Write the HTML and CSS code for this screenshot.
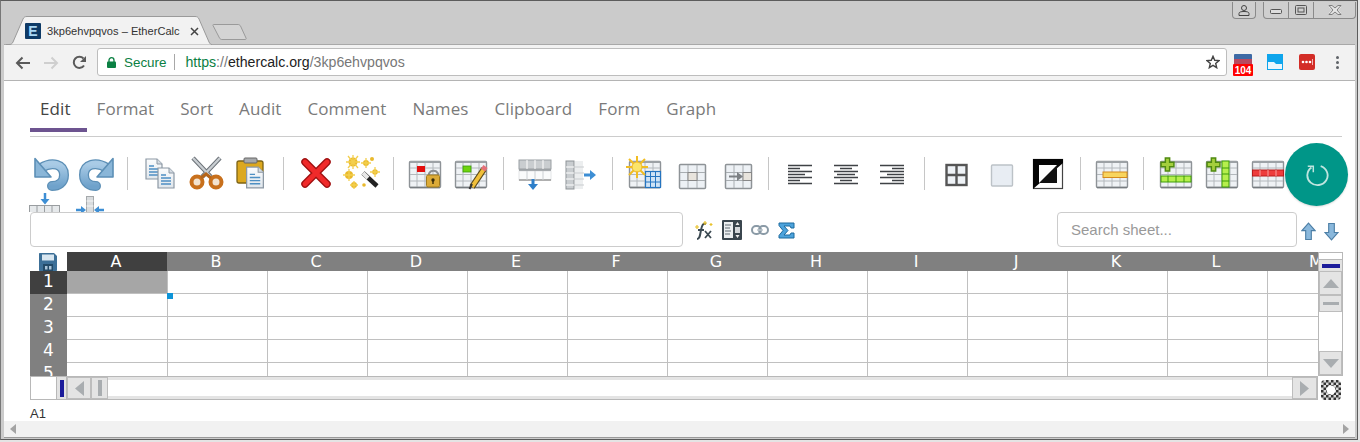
FILE: index.html
```html
<!DOCTYPE html>
<html lang="en">
<head>
<meta charset="utf-8">
<title>3kp6ehvpqvos – EtherCalc</title>
<link rel="stylesheet" href="styles.css">
</head>
<body>
<svg class="defs" width="0" height="0" aria-hidden="true">
  <defs>
    <linearGradient id="gfold" x1="0" y1="0" x2="0" y2="1"><stop offset="0" stop-color="#fbfcfd"/><stop offset="1" stop-color="#dfe6ec"/></linearGradient>
    <linearGradient id="gblue" x1="0" y1="0" x2="0" y2="1"><stop offset="0" stop-color="#a9cbe6"/><stop offset="1" stop-color="#6fa2cb"/></linearGradient>
    <symbol id="undo" viewBox="0 0 46 36">
      <path d="M14 13C25 6 37 9 37 20C37 28 31 31 25 31" fill="none" stroke="#5c8fb6" stroke-width="10" stroke-linecap="round"/>
      <path d="M14 13C25 6 37 9 37 20C37 28 31 31 25 31" fill="none" stroke="url(#gblue)" stroke-width="7.400" stroke-linecap="round"/>
      <path d="M8 3.500L8 22L24 22Z" fill="#8ab6d8" stroke="#5c8fb6" stroke-width="1.600" stroke-linejoin="round"/>
    </symbol>
    <symbol id="doc" viewBox="0 0 18 22">
      <path d="M1 1H12L17 6V21H1Z" fill="url(#gfold)" stroke="#8c98a4" stroke-width="1.200"/>
      <path d="M12 1V6H17" fill="#d5dce3" stroke="#8c98a4"/>
      <path d="M4 8H9M4 11H14M4 14H14M4 17H14" stroke="#4d8fc3" stroke-width="1.300"/>
    </symbol>
    <symbol id="tb" viewBox="0 0 46 36">
      <rect x="7.500" y="6.500" width="31" height="26" rx="1" fill="#eff2f5" stroke="#8e9397" stroke-width="1.400"/>
      <path d="M15 7V32M23 7V32M31 7V32M8 13H38M8 19.500H38M8 26H38" stroke="#b3b8bc" stroke-width="1"/>
      <path d="M8 32.500H38" stroke="#777c80" stroke-width="1.500"/>
      <path d="M8 7H38" stroke="#9ca1a5" stroke-width="2"/>
    </symbol>
    <symbol id="tb3" viewBox="0 0 46 36">
      <rect x="11.500" y="9.500" width="26" height="24" rx="1" fill="#edf1f5" stroke="#8e9397" stroke-width="1.500"/>
      <path d="M20 10V33M29 10V33M12 17.500H37M12 25.500H37" stroke="#a8adb1" stroke-width="1"/>
    </symbol>
    <symbol id="plus" viewBox="0 0 14 14">
      <path d="M5 1H9V5H13V9H9V13H5V9H1V5H5Z" fill="#a4cf3d" stroke="#4f8a10" stroke-width="1.400"/>
    </symbol>
    <symbol id="al" viewBox="0 0 46 36">
      <path d="M10 10.500H34M10 13.500H22M10 16.500H34M10 19.500H27M10 22.500H34M10 25.500H22M10 28.500H34" stroke="#3f4246" stroke-width="1.600"/>
    </symbol>
  </defs>
</svg>

<div class="window">
  <header class="titlebar">
    <div class="tabs">
      <div class="tab">
        <svg class="tab-shape" width="206" height="30" viewBox="0 0 206 30"><path d="M0 29.500H3C5 29.500 6 29 7 27L17 4C18 2 19 1.500 21 1.500H189C191 1.500 192 2 193 4L203 27C204 29 205 29.500 206 29.500" fill="#f2f2f2" stroke="#9a9a9a"/></svg>
        <span class="favicon">E</span>
        <span class="tab-title">3kp6ehvpqvos – EtherCalc</span>
        <svg class="tab-close" width="9" height="9" viewBox="0 0 9 9"><path d="M1 1L8 8M8 1L1 8" stroke="#444" stroke-width="1.500"/></svg>
      </div>
      <svg class="newtab" width="36" height="18" viewBox="0 0 36 18"><path d="M1.500 1.500H26C27 1.500 28 2 28.500 3L34 15C34.500 16 34 16.500 33 16.500H10C9 16.500 8 16 7.500 15L1 2.500C.7 2 1 1.500 1.500 1.500Z" fill="#d4d4d4" stroke="#9a9a9a"/></svg>
    </div>
    <div class="caption">
      <div class="cap-group cap-user">
        <svg width="12" height="11" viewBox="0 0 12 11"><circle cx="6" cy="3" r="2.500" fill="none" stroke="#444"/><path d="M1 10.500V8.500C1 7 3 6.500 6 6.500S11 7 11 8.500V10.500Z" fill="none" stroke="#444"/></svg>
      </div>
      <div class="cap-group cap-win">
        <span class="cap-btn cap-min"><svg width="12" height="6" viewBox="0 0 12 6"><rect x=".5" y=".5" width="11" height="4" rx="1" fill="#ddd" stroke="#555"/></svg></span>
        <span class="cap-btn cap-max"><svg width="12" height="10" viewBox="0 0 12 10"><rect x=".5" y=".5" width="11" height="9" rx="1" fill="none" stroke="#555"/><rect x="3" y="3" width="6" height="4" fill="none" stroke="#555"/></svg></span>
        <span class="cap-btn cap-close"><svg width="14" height="10" viewBox="0 0 14 10"><path d="M2 1L12 9M12 1L2 9" stroke="#eee" stroke-width="3"/><path d="M1 .5H4L7 3 10 .5H13L9 5 13 9.500H10L7 7 4 9.500H1L5 5Z" fill="#e6e6e6" stroke="#666" stroke-width=".8"/></svg></span>
      </div>
    </div>
  </header>

  <div class="browserbar">
    <svg class="nav-ico" width="16" height="14" viewBox="0 0 16 14"><path d="M15 7H2M7.500 1.500L2 7L7.500 12.500" fill="none" stroke="#5a5a5a" stroke-width="2"/></svg>
    <svg class="nav-ico" width="16" height="14" viewBox="0 0 16 14"><path d="M1 7H14M8.500 1.500L14 7L8.500 12.500" fill="none" stroke="#cfcfcf" stroke-width="2"/></svg>
    <svg class="nav-ico" width="16" height="16" viewBox="0 0 16 16"><path d="M13 10.500A5.600 5.600 0 1 1 12.500 3.500" fill="none" stroke="#5a5a5a" stroke-width="2"/><path d="M15 1V7H9Z" fill="#5a5a5a"/></svg>
    <div class="omnibox">
      <svg class="lock" width="9" height="11" viewBox="0 0 9 11"><rect y="4.500" width="9" height="6.500" rx="1" fill="#0b8043"/><path d="M2 5V3.200A2.500 2.500 0 0 1 7 3.200V5" fill="none" stroke="#0b8043" stroke-width="1.300"/></svg>
      <span class="secure">Secure</span>
      <span class="omni-sep"></span>
      <span class="url"><span class="u-green">https</span><span class="u-gray">://</span><span class="u-dark">ethercalc.org</span><span class="u-gray">/3kp6ehvpqvos</span></span>
      <svg class="star" width="14" height="14" viewBox="0 0 14 14"><path d="M7 1.300L8.700 5.300 13 5.600 9.700 8.400 10.700 12.700 7 10.400 3.300 12.700 4.300 8.400 1 5.600 5.300 5.300Z" fill="none" stroke="#444" stroke-width="1.400"/></svg>
    </div>
    <div class="ext ext-db">
      <svg width="18" height="14" viewBox="0 0 18 14"><rect width="18" height="6" rx="1" fill="#3d6aa5"/><rect y="5" width="18" height="9" fill="#b8495f"/></svg>
      <span class="ext-badge">104</span>
    </div>
    <div class="ext">
      <svg width="16" height="16" viewBox="0 0 16 16"><rect width="16" height="16" fill="#0ea5ec"/><path d="M1 8H7L9 10H15V15H1Z" fill="#eaf6fd"/></svg>
    </div>
    <div class="ext">
      <svg width="16" height="16" viewBox="0 0 16 16"><rect width="16" height="16" rx="2" fill="#d32d27"/><circle cx="4" cy="8" r="1.300" fill="#fff"/><circle cx="7.500" cy="8" r="1.300" fill="#fff"/><circle cx="11" cy="8" r="1.300" fill="#fff"/><rect x="13" y="5" width="1" height="6" fill="#f5b5b3"/></svg>
    </div>
    <div class="kebab"><i></i><i></i><i></i></div>
  </div>

  <main class="page">
    <nav class="sheet-tabs">
      <span class="stab active">Edit</span>
      <span class="stab">Format</span>
      <span class="stab">Sort</span>
      <span class="stab">Audit</span>
      <span class="stab">Comment</span>
      <span class="stab">Names</span>
      <span class="stab">Clipboard</span>
      <span class="stab">Form</span>
      <span class="stab">Graph</span>
    </nav>

    <div class="toolbar">
      <div class="tool-row">
        <svg class="ti" viewBox="0 0 46 36"><use href="#undo"/></svg>
        <svg class="ti" viewBox="0 0 46 36"><g transform="matrix(-1 0 0 1 48 0)"><use href="#undo" width="46" height="36"/></g></svg>
        <i class="sep"></i>
        <svg class="ti" viewBox="0 0 46 36"><use href="#doc" x="8" y="3" width="18" height="22"/><use href="#doc" x="20" y="12" width="18" height="22"/></svg>
        <svg class="ti" viewBox="0 0 46 36">
          <path d="M10 3L28 22M37 3L19 22" stroke="#6c7278" stroke-width="4.400"/><path d="M10 3L28 22M37 3L19 22" stroke="#c9ced2" stroke-width="2.400"/>
          <circle cx="14" cy="27" r="5.500" fill="#f3e3cf" stroke="#c8701c" stroke-width="4"/><circle cx="33" cy="27" r="5.500" fill="#f3e3cf" stroke="#c8701c" stroke-width="4"/>
          <path d="M18 23L23 19 28 23" fill="none" stroke="#b5651a" stroke-width="3"/>
        </svg>
        <svg class="ti" viewBox="0 0 46 36">
          <rect x="8" y="6" width="26" height="22" rx="2" fill="#dca81f" stroke="#7d6314" stroke-width="1.300"/>
          <rect x="15" y="3" width="13" height="5" rx="1" fill="#a6a9ab" stroke="#666"/>
          <use href="#doc" x="16" y="11" width="20" height="23"/>
        </svg>
        <i class="sep"></i>
        <svg class="ti" viewBox="0 0 46 36">
          <path d="M12 7L34 29M34 7L12 29" stroke="#a01010" stroke-width="7.500" stroke-linecap="round"/>
          <path d="M12 7L34 29M34 7L12 29" stroke="#f02a2a" stroke-width="4.800" stroke-linecap="round"/>
        </svg>
        <svg class="ti" viewBox="0 0 46 36">
          <path d="M24 18L38 31" stroke="#222" stroke-width="4.500"/><path d="M24 18L29 23" stroke="#e8e8e8" stroke-width="4"/>
          <g fill="#e9b92c"><circle cx="14" cy="7" r="4.500"/><circle cx="10" cy="20" r="4"/><circle cx="15" cy="30" r="3"/><circle cx="27" cy="8" r="3"/><circle cx="33" cy="4" r="2"/><circle cx="36" cy="17" r="2.800"/><circle cx="25" cy="30" r="1.800"/></g>
          <path d="M14 0V14M7 7H21M9 13L19 1M19 13L9 1M10 14V26M4 20H16M27 3V13M22 8H32M36 12V22M31 17H41M15 26V34M11 30H19" stroke="#f3cf4f" stroke-width="1.300"/>
        </svg>
        <i class="sep"></i>
        <svg class="ti" viewBox="0 0 46 36"><use href="#tb"/><rect x="15" y="11" width="8" height="6" fill="#e30d0d"/><path d="M27 20V18.500A5 5 0 0 1 36 18.500V20" fill="none" stroke="#8c8f92" stroke-width="2"/><rect x="24.500" y="20" width="13" height="12" rx="1.500" fill="#dcab38" stroke="#a07a1c"/><circle cx="31" cy="25" r="1.700" fill="#3a2d0b"/><rect x="30.300" y="25" width="1.400" height="4" fill="#3a2d0b"/></svg>
        <svg class="ti" viewBox="0 0 46 36"><use href="#tb"/><rect x="15" y="11" width="8" height="6" fill="#6ed40e" stroke="#3a9c0a" stroke-width=".8"/><path d="M24 32L36 14" stroke="#5a4a1a" stroke-width="6"/><path d="M24 32L36 14" stroke="#f0bf3a" stroke-width="4"/><path d="M35 15L37.500 11.500" stroke="#e5707a" stroke-width="5"/><path d="M21.500 34L24 29" stroke="#333" stroke-width="2"/></svg>
        <i class="sep"></i>
        <svg class="ti" viewBox="0 0 46 36"><rect x="7" y="5" width="32" height="9" fill="#c9cdd0" stroke="#9a9fa3"/><path d="M15 5V14M23 5V14M31 5V14" stroke="#fff"/><rect x="7" y="16" width="32" height="9" fill="#fafbfb" stroke="#e4e6e8"/><path d="M7 15H39" stroke="#8e9397" stroke-width="1.500"/><path d="M7 25H39" stroke="#999" stroke-width="1.500"/><path d="M15 16V25M23 16V25M31 16V25" stroke="#ccd0d3"/><path d="M21 24V30" stroke="#2e7fc9" stroke-width="3"/><path d="M16 29H26L21 35Z" fill="#2e7fc9"/></svg>
        <svg class="ti" viewBox="0 0 46 36"><rect x="8" y="6" width="8" height="28" fill="#c9cdd0" stroke="#8e9397"/><path d="M8 12H16M8 18H16M8 24H16M8 30H16" stroke="#fff"/><rect x="17" y="6" width="8" height="28" fill="#eceeef"/><path d="M17 12H26M17 18H26M17 24H26M17 30H26" stroke="#c9cccf"/><path d="M26 20H33" stroke="#3d8ed4" stroke-width="3"/><path d="M32 15V25L38 20Z" fill="#3d8ed4"/></svg>
        <i class="sep"></i>
        <svg class="ti" viewBox="0 0 46 36"><use href="#tb"/><rect x="23.500" y="16.500" width="15" height="16" fill="#cfe3f5" stroke="#2474c0" stroke-width="1.200"/><path d="M23.500 21.500H38.500M23.500 27H38.500M28.500 16.500V32.500M33.500 16.500V32.500" stroke="#2474c0"/><path d="M15 1V23M4 12H26M7 4L23 20M23 4L7 20" stroke="#f1bd22" stroke-width="2"/><circle cx="15" cy="12" r="5" fill="#fbe46a" stroke="#eeb522"/></svg>
        <svg class="ti" viewBox="0 0 46 36"><use href="#tb3"/><rect x="20" y="17.500" width="9" height="8" fill="#e8e4dd" stroke="#888"/></svg>
        <svg class="ti" viewBox="0 0 46 36"><use href="#tb3"/><rect x="29" y="17.500" width="8.500" height="8" fill="#e8e4dd" stroke="#888"/><path d="M15 21.500H24" stroke="#7c8084" stroke-width="2"/><path d="M23 17V26L29 21.500Z" fill="#7c8084"/></svg>
        <i class="sep"></i>
        <svg class="ti" viewBox="0 0 46 36"><use href="#al"/></svg>
        <svg class="ti" viewBox="0 0 46 36"><path d="M10 10.500H34M16 13.500H28M10 16.500H34M13 19.500H31M10 22.500H34M16 25.500H28M10 28.500H34" stroke="#3f4246" stroke-width="1.600"/></svg>
        <svg class="ti" viewBox="0 0 46 36"><path d="M10 10.500H34M22 13.500H34M10 16.500H34M17 19.500H34M10 22.500H34M22 25.500H34M10 28.500H34" stroke="#3f4246" stroke-width="1.600"/></svg>
        <i class="sep"></i>
        <svg class="ti" viewBox="0 0 46 36"><rect x="13.500" y="10" width="20" height="20" fill="#eef2f6" stroke="#555" stroke-width="2.400"/><path d="M23.500 10V30M13.500 20H33.500" stroke="#555" stroke-width="2.400"/></svg>
        <svg class="ti" viewBox="0 0 46 36"><rect x="12.500" y="10" width="21" height="21" rx="1" fill="#e8edf3" stroke="#bcc2c7" stroke-width="1.400"/></svg>
        <svg class="ti" viewBox="0 0 46 36"><rect x="8.500" y="4.500" width="29" height="29" fill="#fff" stroke="#444" stroke-width="1.200"/><path d="M8 4H38V8L8 34Z" fill="#050505"/><rect x="14" y="10" width="18" height="18" fill="#fff"/><path d="M32 10V28H14Z" fill="#111"/></svg>
        <i class="sep"></i>
        <svg class="ti" viewBox="0 0 46 36"><use href="#tb"/><rect x="14" y="17" width="24" height="5.500" fill="#f8d55e" stroke="#d48a1c"/></svg>
        <i class="sep"></i>
        <svg class="ti" viewBox="0 0 46 36"><use href="#tb"/><rect x="8" y="21" width="30" height="6" fill="#b6ef4d" stroke="#3c9b0a"/><path d="M15 21V27M23 21V27M31 21V27" stroke="#3c9b0a"/><use href="#plus" x="7" y="2" width="15" height="15"/></svg>
        <svg class="ti" viewBox="0 0 46 36"><use href="#tb"/><rect x="23" y="6" width="7" height="26" fill="#b6ef4d" stroke="#3c9b0a"/><path d="M23 13H30M23 19H30M23 26H30" stroke="#3c9b0a"/><use href="#plus" x="7" y="2" width="15" height="15"/></svg>
        <svg class="ti" viewBox="0 0 46 36"><use href="#tb"/><rect x="7.500" y="15" width="31" height="6" fill="#ee3d3d" stroke="#b81c1c"/><path d="M15 15V21M23 15V21M31 15V21" stroke="#f7a0a0"/></svg>
      </div>
      <div class="tool-row tool-row-2">
        <svg class="ti" viewBox="0 0 46 36"><rect x="2.500" y="14.500" width="30" height="7" fill="#e6e9eb" stroke="#999da0"/><path d="M10 14.500V21M17.500 14.500V21M25 14.500V21" stroke="#999da0"/><path d="M18 2V9" stroke="#3d8ed4" stroke-width="2.500"/><path d="M13.500 8H22.500L18 13.500Z" fill="#3d8ed4"/></svg>
        <svg class="ti" viewBox="0 0 46 36"><rect x="13.500" y="5.500" width="7" height="16" fill="#d9dcde" stroke="#a5a9ac"/><path d="M13.500 10H20.500M13.500 15H20.500" stroke="#f5f5f5"/><path d="M3 19H9M25 19H31" stroke="#3d8ed4" stroke-width="2.500"/><path d="M8 15V23L13 19ZM26 15V23L21 19Z" fill="#3d8ed4"/></svg>
      </div>
    </div>

    <div class="formula-row">
      <input class="formula" type="text" aria-label="Formula">
      <div class="form-icons">
        <svg width="20" height="20" viewBox="0 0 20 20"><path d="M4 19C7 19 7 15 8 10C9 5 10 3 13 4" fill="none" stroke="#3c4a52" stroke-width="2"/><path d="M5 10H11M12 11L18 18M18 11L12 18" fill="none" stroke="#3c4a52" stroke-width="1.800"/><path d="M12 1V5M10 3H14M4 5V9M2 7H6M18 3V6M16.500 4.500H19.500" stroke="#e9c32e" stroke-width="1.200"/></svg>
        <svg width="20" height="20" viewBox="0 0 20 20"><rect width="20" height="20" rx="1" fill="#3a464e"/><rect x="2" y="2" width="9" height="16" fill="#eceff1"/><path d="M3 5H9M3 8H8M3 11H9M3 14H8" stroke="#5f6b73"/><rect x="13" y="7" width="5" height="6" fill="#d3d7da"/><path d="M15.500 2L13.500 5H17.500ZM15.500 18L13.500 15H17.500Z" fill="#eee"/></svg>
        <svg width="18" height="10" viewBox="0 0 18 10"><rect x="1" y="1" width="9" height="8" rx="4" fill="none" stroke="#8a9aa6" stroke-width="2"/><rect x="8" y="1" width="9" height="8" rx="4" fill="none" stroke="#8a9aa6" stroke-width="2"/><path d="M6 5H12" stroke="#bcc6cd" stroke-width="1.500"/></svg>
        <svg width="17" height="17" viewBox="0 0 17 17"><path d="M1 1H16V6H13L12 4H6L10 8.500 6 13H12L13 11H16V16H1V13.500L5 8.500 1 3.500Z" fill="#4da3dc" stroke="#1d6a9e"/></svg>
      </div>
      <input class="search" type="text" placeholder="Search sheet..." aria-label="Search sheet">
      <div class="search-arrows">
        <svg width="15" height="19" viewBox="0 0 16 20"><path d="M8 1L15 9H11V18.500H5V9H1Z" fill="#8ab8dc" stroke="#4d7fa6" stroke-width="1.200"/></svg>
        <svg width="15" height="19" viewBox="0 0 16 20"><path d="M8 19L15 11H11V1.500H5V11H1Z" fill="#8ab8dc" stroke="#4d7fa6" stroke-width="1.200"/></svg>
      </div>
    </div>

    <section class="sheet">
      <div class="sheet-top">
        <div class="grid">
          <div class="corner"><svg width="18" height="18" viewBox="0 0 18 18"><path d="M1 0H15L18 3V17C18 17.600 17.600 18 17 18H1C.4 18 0 17.600 0 17V1C0 .4 .4 0 1 0Z" fill="#3c6f97"/><rect x="3" y="1.500" width="12" height="6" fill="#d8e6f0"/><rect x="4" y="11" width="10" height="7" fill="#234a68"/><rect x="6" y="13" width="2.500" height="3.500" fill="#aac4d8"/><rect x="10" y="13" width="2.500" height="3.500" fill="#aac4d8"/></svg></div>
          <div class="ch ch-sel">A</div><div class="ch">B</div><div class="ch">C</div><div class="ch">D</div><div class="ch">E</div><div class="ch">F</div><div class="ch">G</div><div class="ch">H</div><div class="ch">I</div><div class="ch">J</div><div class="ch">K</div><div class="ch">L</div><div class="ch">M</div>
          <div class="rh rh-sel">1</div><div class="c c-sel"></div><div class="c"></div><div class="c"></div><div class="c"></div><div class="c"></div><div class="c"></div><div class="c"></div><div class="c"></div><div class="c"></div><div class="c"></div><div class="c"></div><div class="c"></div><div class="c"></div>
          <div class="rh">2</div><div class="c"></div><div class="c"></div><div class="c"></div><div class="c"></div><div class="c"></div><div class="c"></div><div class="c"></div><div class="c"></div><div class="c"></div><div class="c"></div><div class="c"></div><div class="c"></div><div class="c"></div>
          <div class="rh">3</div><div class="c"></div><div class="c"></div><div class="c"></div><div class="c"></div><div class="c"></div><div class="c"></div><div class="c"></div><div class="c"></div><div class="c"></div><div class="c"></div><div class="c"></div><div class="c"></div><div class="c"></div>
          <div class="rh">4</div><div class="c"></div><div class="c"></div><div class="c"></div><div class="c"></div><div class="c"></div><div class="c"></div><div class="c"></div><div class="c"></div><div class="c"></div><div class="c"></div><div class="c"></div><div class="c"></div><div class="c"></div>
          <div class="rh">5</div><div class="c"></div><div class="c"></div><div class="c"></div><div class="c"></div><div class="c"></div><div class="c"></div><div class="c"></div><div class="c"></div><div class="c"></div><div class="c"></div><div class="c"></div><div class="c"></div><div class="c"></div>
          <span class="fill-handle"></span>
        </div>
        <div class="vscroll">
          <div class="vs-white"></div>
          <div class="vs-handle"><i></i></div>
          <div class="sb-btn vs-up"><svg width="16" height="9" viewBox="0 0 16 9"><path d="M8 0L16 9H0Z" fill="#a9adb0"/></svg></div>
          <div class="sb-btn vs-thumb"><i></i></div>
          <div class="vs-track"></div>
          <div class="sb-btn vs-down"><svg width="16" height="9" viewBox="0 0 16 9"><path d="M8 9L16 0H0Z" fill="#a9adb0"/></svg></div>
        </div>
      </div>
      <div class="sheet-bottom">
        <div class="hs">
          <div class="hs-white"></div>
          <div class="hs-handle"><i></i></div>
          <div class="sb-btn hs-left"><svg width="9" height="15" viewBox="0 0 9 15"><path d="M0 7.500L9 0V15Z" fill="#a9adb0"/></svg></div>
          <div class="sb-btn hs-thumb"><i></i></div>
          <div class="hs-track"></div>
          <div class="sb-btn hs-right"><svg width="9" height="15" viewBox="0 0 9 15"><path d="M9 7.500L0 0V15Z" fill="#a9adb0"/></svg></div>
        </div>
        <svg class="pane-ico" width="20" height="20" viewBox="0 0 20 20">
          <defs><pattern id="chk" width="5" height="5" patternUnits="userSpaceOnUse"><rect width="5" height="5" fill="#d8d8d8"/><rect width="2.500" height="2.500" fill="#333"/><rect x="2.500" y="2.500" width="2.500" height="2.500" fill="#333"/></pattern></defs>
          <rect width="20" height="20" rx="4" fill="url(#chk)"/><circle cx="10" cy="10" r="4.500" fill="#fff"/>
        </svg>
      </div>
      <div class="status">A1</div>
    </section>

    <button class="fab" type="button" aria-label="Refresh">
      <svg width="24" height="24" viewBox="0 0 26 26"><path d="M17 3.500A11 10.500 0 1 1 7 5" fill="none" stroke="#bfe5df" stroke-width="2"/><path d="M3 3.500H9V10" fill="none" stroke="#bfe5df" stroke-width="1.600"/></svg>
    </button>
  </main>

  <div class="page-scroll">
    <svg width="6" height="10" viewBox="0 0 6 10"><path d="M0 5L6 0V10Z" fill="#a3a3a3"/></svg>
    <svg width="6" height="10" viewBox="0 0 6 10"><path d="M6 5L0 0V10Z" fill="#a3a3a3"/></svg>
  </div>
</div>
</body>
</html>
```

FILE: styles.css
```css
* { box-sizing: border-box; }

html, body {
  margin: 0;
  padding: 0;
  width: 1360px;
  height: 442px;
  overflow: hidden;
  background: #e4e4e4;
  font-family: "Liberation Sans", Arial, sans-serif;
}

.defs { display: block; width: 0; height: 0; }

.window {
  width: 1358px;
  height: 440px;
  padding: 1px 2px 2px 3px;
  background: #cbcbcb;
  border: 1px solid #5c5c5c;
  border-left-color: #777;
  display: flex;
  flex-direction: column;
}

/* Browser chrome */
.titlebar {
  height: 42px;
  flex: none;
  display: flex;
  justify-content: space-between;
  align-items: flex-start;
}

.tabs {
  display: flex;
  align-items: flex-start;
  padding-left: 2px;
  padding-top: 13px;
}

.tab {
  position: relative;
  width: 206px;
  height: 29px;
  display: flex;
  align-items: center;
  padding: 3px 0 0 19px;
}

.tab-shape { position: absolute; left: 0; top: 0; }

.favicon, .tab-title, .tab-close { position: relative; }

.favicon {
  width: 16px;
  height: 16px;
  flex: none;
  background: #0e3a66;
  color: #a9d8f5;
  font-size: 14px;
  font-weight: bold;
  line-height: 16px;
  text-align: center;
  border-radius: 1px;
}

.tab-title {
  margin-left: 6px;
  width: 129px;
  white-space: nowrap;
  font-size: 11.1px;
  color: #333;
}

.tab-close { margin-left: 14px; }

.newtab { margin-left: 0; margin-top: 8px; }

.caption { display: flex; gap: 7px; }

.cap-group {
  height: 17px;
  border: 1px solid #8a8a8a;
  border-top: none;
  border-radius: 0 0 4px 4px;
  display: flex;
  background: #cfcfcf;
}

.cap-user {
  width: 24px;
  align-items: center;
  justify-content: center;
}

.cap-win { width: 93px; margin-right: -1px; }

.cap-btn {
  display: flex;
  align-items: center;
  justify-content: center;
  border-right: 1px solid #8a8a8a;
}

.cap-min { width: 25px; padding-top: 4px; }
.cap-max { width: 25px; }
.cap-close { flex: 1; border-right: none; }

.browserbar {
  height: 37px;
  flex: none;
  background: #f2f2f2;
  border-top: 1px solid #a8a8a8;
  border-bottom: 1px solid #b4b4b4;
  display: flex;
  align-items: center;
  padding-left: 11px;
}

.nav-ico { margin-right: 12px; flex: none; }

.omnibox {
  width: 1130px;
  height: 28px;
  margin-left: -2px;
  margin-bottom: 1px;
  background: #fff;
  border: 1px solid #bdbdbd;
  border-radius: 3px;
  display: flex;
  align-items: center;
  padding-left: 9px;
  font-size: 14.15px;
}

.lock { flex: none; }

.secure {
  margin-left: 8px;
  color: #0b8043;
  font-size: 13.4px;
}

.omni-sep {
  width: 1px;
  height: 16px;
  background: #a8a8a8;
  margin: 0 10px 0 8px;
}

.url { white-space: nowrap; flex: 1; }
.u-green { color: #0b8043; }
.u-gray { color: #777; }
.u-dark { color: #222; }

.star { flex: none; margin-right: 6px; }

.ext {
  position: relative;
  width: 32px;
  height: 22px;
  flex: none;
  display: flex;
  justify-content: center;
  padding-top: 2px;
}

.ext-badge {
  position: absolute;
  left: 6px;
  top: 12px;
  width: 20px;
  height: 12px;
  background: #f00;
  color: #fff;
  font-size: 10px;
  font-weight: bold;
  line-height: 13px;
  text-align: center;
  border-radius: 1px;
}

.kebab {
  margin-left: 13px;
  display: flex;
  flex-direction: column;
  gap: 2px;
}

.kebab i {
  width: 3px;
  height: 3px;
  background: #5f6368;
  border-radius: 50%;
}

/* Page */
.page {
  position: relative;
  height: 340px;
  flex: none;
  background: #fff;
  padding: 0 13px 0 26px;
  overflow: hidden;
}

.sheet-tabs {
  display: flex;
  height: 56px;
  padding-top: 16px;
  border-bottom: 1px solid #ccc;
}

.stab {
  height: 35px;
  padding: 1px 16px 0 10px;
  font-family: "Open Sans", sans-serif;
  font-size: 17px;
  letter-spacing: 0.08px;
  line-height: 22px;
  color: #7a7a7a;
  white-space: nowrap;
}

.stab.active {
  color: #444;
  border-bottom: 4px solid #6d5490;
}

.toolbar {
  height: 57px;
  margin: 18px 0 0 -3px;
  overflow: hidden;
}

.tool-row { display: flex; height: 36px; }

.tool-row-2 { height: 21px; }

.ti {
  width: 46px;
  height: 36px;
  flex: none;
  display: block;
}

.sep {
  width: 1px;
  height: 33px;
  margin: 2px 8.375px 0;
  background: #c6c6c6;
  flex: none;
}

.formula-row {
  height: 36px;
  display: flex;
  align-items: flex-start;
}

.formula, .search {
  height: 35px;
  border: 1px solid #ccc;
  border-radius: 4px;
  background: #fff;
  font: 15px "Liberation Sans", Arial, sans-serif;
  outline: none;
  flex: none;
}

.formula { width: 653px; }

.search {
  width: 240px;
  padding: 0 13px;
}

.search::placeholder { color: #999; opacity: 1; }

.form-icons {
  display: flex;
  align-items: center;
  gap: 9px;
  height: 36px;
  margin-left: 10px;
  flex: 1;
}

.search-arrows {
  display: flex;
  gap: 8px;
  width: 42px;
  margin-left: 3px;
  padding: 10px 0 0 1px;
}

/* Spreadsheet */
.sheet { margin-top: 4px; width: 1313px; }

.sheet-top { display: flex; }

.grid {
  position: relative;
  width: 1288px;
  height: 124px;
  overflow: hidden;
  display: grid;
  grid-template-columns: 37px repeat(13, 100px);
  grid-template-rows: 19px repeat(5, 23px);
  font-family: "DejaVu Sans", sans-serif;
}

.corner {
  background: #fff;
  display: flex;
  justify-content: center;
  align-items: center;
  padding-right: 1px;
}

.ch, .rh {
  background: #808080;
  color: #fff;
  font-size: 16px;
  text-align: center;
}

.ch { line-height: 19px; padding-right: 2px; }
.rh { line-height: 19px; padding-top: 1px; font-size: 17px; }

.ch-sel, .rh-sel { background: #404040; }

.c {
  border-left: 1px solid #c0c0c0;
  border-bottom: 1px solid #c0c0c0;
  background: #fff;
}

.rh + .c { border-left: none; }

.c-sel { background: #a6a6a6; }

.fill-handle {
  position: absolute;
  left: 137px;
  top: 41px;
  width: 6px;
  height: 6px;
  background: #0d94d8;
}

.vscroll {
  width: 25px;
  height: 124px;
  flex: none;
  background: #e0e0e0;
  border: 1px solid #b8b8b8;
  display: flex;
  flex-direction: column;
}

.vs-white { height: 7px; background: #fff; border-bottom: 1px solid #b8b8b8; }

.vs-handle {
  height: 11px;
  background: #e2e2e2;
  display: flex;
  justify-content: center;
  align-items: center;
}

.vs-handle i { width: 18px; height: 4px; background: #1b1b9a; }

.sb-btn {
  background: #e4e4e4;
  border: 1px solid #bdbdbd;
  display: flex;
  align-items: center;
  justify-content: center;
  flex: none;
}

.vs-up { height: 24px; }
.vs-thumb { height: 17px; }
.vs-thumb i { width: 16px; height: 3px; background: #a9adb0; }
.vs-track { height: 39px; background: #fff; }
.vs-down { height: 24px; }

.sheet-bottom { display: flex; align-items: flex-start; }

.hs {
  width: 1288px;
  height: 24px;
  flex: none;
  display: flex;
  background: #e2e2e2;
  border: 1px solid #b8b8b8;
}

.hs-white { width: 26px; background: #fff; border-right: 1px solid #b8b8b8; }

.hs-handle {
  width: 10px;
  display: flex;
  align-items: center;
  justify-content: center;
  border-right: 1px solid #b8b8b8;
}

.hs-handle i { width: 4px; height: 17px; background: #1b1b9a; }

.hs-left { width: 24px; }
.hs-thumb { width: 17px; }
.hs-thumb i { width: 4px; height: 16px; background: #a9adb0; }
.hs-track { flex: 1; background: #fff; border-top: 3px solid #e4e4e4; border-bottom: 3px solid #e4e4e4; }
.hs-right { width: 25px; }

.pane-ico { margin: 4px 0 0 3px; }

.status {
  margin-top: 6px;
  font-size: 13px;
  line-height: 15px;
  color: #333;
}

.fab {
  position: absolute;
  left: 1281px;
  top: 62px;
  width: 63px;
  height: 63px;
  border: none;
  border-radius: 50%;
  background: #009688;
  padding: 0;
  display: flex;
  align-items: center;
  justify-content: center;
  box-shadow: 0 1px 2px rgba(0, 0, 0, 0.15);
}

.page-scroll {
  height: 17px;
  flex: none;
  background: #f1f1f1;
  border-bottom: 1px solid #9a9a9a;
  display: flex;
  justify-content: space-between;
  align-items: center;
  padding: 0 6px;
}
```
